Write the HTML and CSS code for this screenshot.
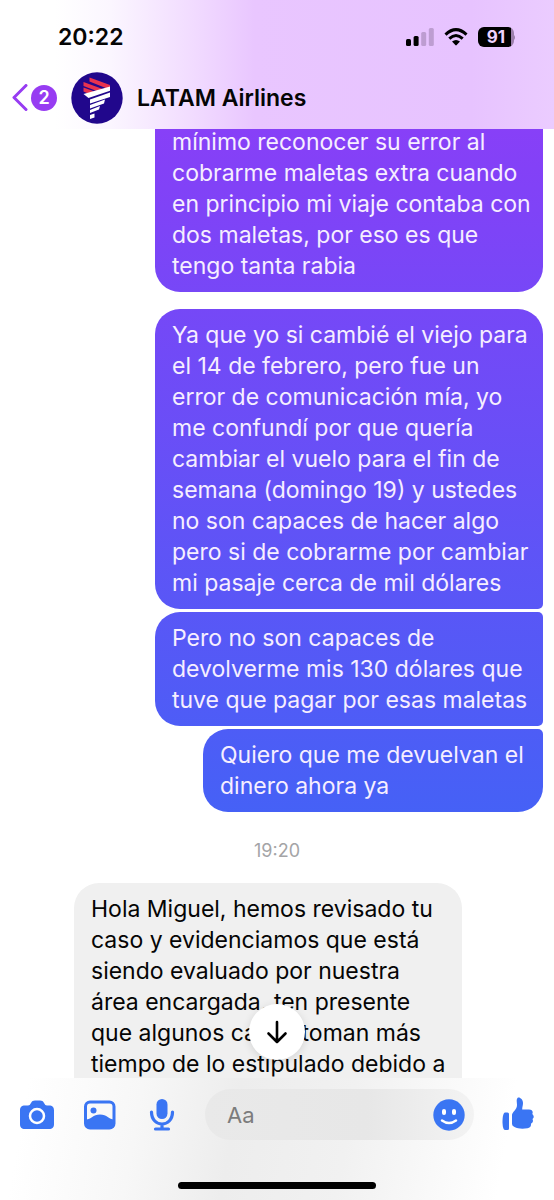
FILE: index.html
```html
<!DOCTYPE html>
<html lang="es">
<head>
<meta charset="utf-8">
<meta name="viewport" content="width=device-width, initial-scale=1">
<title>LATAM Airlines</title>
<link rel="stylesheet" href="styles.css">
</head>
<body>
<div class="app">
  <header class="top">
    <div class="status">
      <time class="clock">20:22</time>
      <div class="indicators">
        <svg width="28" height="18" viewBox="0 0 28 18" aria-hidden="true">
          <rect x="0" y="11" width="5" height="7" rx="1.5"/>
          <rect x="7.600" y="8" width="5" height="10" rx="1.500"/>
          <rect x="15.200" y="4" width="5" height="14" rx="1.500" fill="#bd9dd1"/>
          <rect x="22.800" y="0" width="5" height="18" rx="1.500" fill="#bd9dd1"/>
        </svg>
        <svg width="24" height="18" viewBox="0 0 24 18" aria-hidden="true">
          <g fill="none" stroke="#000" stroke-width="3">
            <path d="M1.500 6.600Q12-3.400 22.500 6.600"/>
            <path d="M5.300 10.600Q12 4.400 18.700 10.600"/>
          </g>
          <path d="M8 13.500q4-3.200 8 0l-3.300 3.600q-.7.600-1.400 0z"/>
        </svg>
        <div class="battery"><span>91</span></div>
      </div>
    </div>
    <div class="contact">
      <button class="back" type="button" aria-label="Volver, 2 sin leer">
        <svg width="16" height="28" viewBox="0 0 16 28" aria-hidden="true"><path d="M14 1.500 2 13.500l12 12" fill="none" stroke="#973cf2" stroke-width="3" stroke-linecap="round" stroke-linejoin="round"/></svg>
        <span class="unread">2</span>
      </button>
      <svg class="avatar" viewBox="0 0 52 52" aria-hidden="true">
        <circle cx="26" cy="26" r="25.700" fill="#21078c"/>
        <g fill="#e8334f">
          <path d="M18.500 5.500 39 13V15.500L36 16.500 18.500 9.500z"/>
          <path d="M12.500 10 33 17.500 27 19.500 12.500 14z"/>
          <path d="M12.500 15.500 23.500 19.500 17 21.500 12.500 19.500z"/>
        </g>
        <g fill="#fff">
          <path d="M39 14.500V18.800L17.500 26 12.500 22z"/>
          <path d="M39 20.500V25L19 31.500V27.500z"/>
          <path d="M34 27.500 33 31.500 19 36.500V33z"/>
          <path d="M29 34 28 37.500 19 41V38z"/>
          <path d="M23.500 41.500V45.500L19 47V43z"/>
        </g>
      </svg>
      <h1 class="name">LATAM Airlines</h1>
    </div>
  </header>

  <main class="thread">
    <p class="bubble sent cut">mínimo reconocer su error al<br>cobrarme maletas extra cuando<br>en principio mi viaje contaba con<br>dos maletas, por eso es que<br>tengo tanta rabia</p>
    <div class="group">
      <p class="bubble sent first">Ya que yo si cambié el viejo para<br>el 14 de febrero, pero fue un<br>error de comunicación mía, yo<br>me confundí por que quería<br>cambiar el vuelo para el fin de<br>semana (domingo 19) y ustedes<br>no son capaces de hacer algo<br>pero si de cobrarme por cambiar<br>mi pasaje cerca de mil dólares</p>
      <p class="bubble sent middle">Pero no son capaces de<br>devolverme mis 130 dólares que<br>tuve que pagar por esas maletas</p>
      <p class="bubble sent last">Quiero que me devuelvan el<br>dinero ahora ya</p>
    </div>
    <time class="stamp">19:20</time>
    <p class="bubble received">Hola Miguel, hemos revisado tu<br>caso y evidenciamos que está<br>siendo evaluado por nuestra<br>área encargada, ten presente<br>que algunos casos toman más<br>tiempo de lo estipulado debido a</p>
    <button class="jump" type="button" aria-label="Ir al final">
      <svg width="22" height="24" viewBox="0 0 22 24" aria-hidden="true"><path d="M11 2v20M2.500 13.500 11 22l8.500-8.500" fill="none" stroke="#000" stroke-width="2.600" stroke-linecap="round" stroke-linejoin="round"/></svg>
    </button>
  </main>

  <footer class="composer">
    <div class="bar">
      <div class="tools">
        <button type="button" aria-label="Cámara">
          <svg width="34" height="32" viewBox="0 0 34 32"><path fill="#3a75f3" d="M5 6.500h3c1.500 0 2-.8 3-2.500 1-1.800 2-2.500 4-2.500h5c2 0 3 .7 4 2.500 1 1.700 1.500 2.500 3 2.500h2c3.500 0 5 1.500 5 5V25c0 3.500-1.500 5-5 5H5c-3.500 0-5-1.500-5-5V11.500c0-3.500 1.500-5 5-5z"/><circle cx="17" cy="17" r="7" fill="#3a75f3" stroke="#fff" stroke-width="2.500"/></svg>
        </button>
        <button type="button" aria-label="Galería">
          <svg width="32" height="32" viewBox="0 0 32 32"><rect x="1.500" y="3" width="28.500" height="26" rx="4.500" fill="#f9f9f9" stroke="#3a75f3" stroke-width="3"/><circle cx="9.500" cy="11.500" r="3" fill="#3a75f3"/><path d="M2 20.500c5 0 7-5 14-5s9 5 14 5V26q0 3-3 3H5q-3 0-3-3z" fill="#3a75f3"/></svg>
        </button>
        <button type="button" aria-label="Micrófono">
          <svg width="32" height="34" viewBox="-3 0 32 34"><rect x="7.500" y="1" width="11" height="20" rx="5.500" fill="#3a75f3"/><path d="M2.500 14c0 16 21 16 21 0M13 26v5M6.500 31h13" fill="none" stroke="#3a75f3" stroke-width="3.200" stroke-linecap="round"/></svg>
        </button>
      </div>
      <div class="field">
        <input type="text" placeholder="Aa" aria-label="Mensaje">
        <button type="button" aria-label="Emojis">
          <svg width="32" height="32" viewBox="0 0 32 32"><circle cx="16" cy="16" r="15.700" fill="#3a75f3"/><g fill="#fff"><rect x="9" y="10" width="4" height="6" rx="2"/><rect x="19" y="10" width="4" height="6" rx="2"/></g><path d="M9 21.500q7 5 14 0" fill="none" stroke="#fff" stroke-width="2.500" stroke-linecap="round"/></svg>
        </button>
      </div>
      <button type="button" aria-label="Me gusta">
        <svg width="32" height="38" viewBox="0 0 32 38"><g fill="#3a75f3"><path d="M3 16.500h2.500Q7 16.500 7 18v14.500q0 1.500-1.500 1.500H3C1.500 34 .5 30.500.5 25.500s1-9 2.500-9z"/><path d="M10 19c0-3 5-5 5-10 0-2.500-1-5 .5-7C17 .5 21 3 21 7c0 2.500-.8 4-.8 6.500H27c3 0 4.500 2 3.300 4.500 2 1.800 1.700 4 .2 5 1 2 .3 3.800-1.500 4.700.3 2.800-1 4.100-3.500 4.600-5 .7-10 .5-13-1.300Q10 30 10 28z"/></g></svg>
      </button>
    </div>
    <div class="home"></div>
  </footer>
</div>
</body>
</html>
```
FILE: styles.css
```css
* {
  box-sizing: border-box;
}

body {
  margin: 0;
  background: #fff;
  color: #050505;
  font-family: Inter, "Liberation Sans", sans-serif;
}

button {
  display: flex;
  align-items: center;
  justify-content: center;
  padding: 0;
  border: 0;
  background: none;
  color: inherit;
  font: inherit;
}

.app {
  display: flex;
  flex-direction: column;
  height: 100vh;
}

.top {
  flex: none;
  padding: 22px 40px 5px 12px;
  background: linear-gradient(90deg, #fff 10%, #fbf6ff 20%, #f2ddff 34%, #e9c6ff 46%, #e7c3ff 85%, #ebccff 100%);
}

.status {
  display: flex;
  align-items: center;
  justify-content: space-between;
  height: 30px;
  padding-left: 46px;
}

.clock {
  font-size: 23px;
  font-weight: 600;
}

.indicators {
  display: flex;
  align-items: center;
  gap: 10px;
}

.battery {
  display: flex;
  align-items: center;
  justify-content: center;
  width: 36px;
  height: 20px;
  border-radius: 6px;
  background: linear-gradient(90deg, #000 91%, #9c7fac 91%);
  color: #eed4ff;
  font-size: 17px;
  font-weight: 700;
}

.battery::after {
  content: "";
  width: 2px;
  height: 5px;
  margin-right: -10px;
  margin-left: 8px;
  border-radius: 0 2px 2px 0;
  background: #9c7fac;
}

.contact {
  display: flex;
  align-items: center;
  margin-top: 20px;
}

.back {
  gap: 3px;
}

.unread {
  width: 26px;
  height: 26px;
  border-radius: 50%;
  background: #973cf2;
  color: #fff;
  font-size: 18px;
  font-weight: 600;
  line-height: 26px;
}

.avatar {
  width: 52px;
  height: 52px;
  margin: 0 14px;
}

.name {
  margin: 0;
  font-size: 23px;
  font-weight: 600;
}

.thread {
  position: relative;
  display: flex;
  flex: 1;
  flex-direction: column;
  min-height: 0;
  padding: 0 11px 0 74px;
  overflow: hidden;
}

.bubble {
  flex: none;
  margin: 0;
  padding: 11px 17px 10px;
  border-radius: 25px;
  font-size: 23px;
  line-height: 31px;
  white-space: nowrap;
}

.sent {
  align-self: flex-end;
  min-width: 340px;
  background: linear-gradient(#8b3ff8 8%, #8341f7 14%, #4561f6 68%) fixed;
  color: #f6eeff;
}

.cut,
.first,
.middle {
  width: 388px;
}

.cut {
  margin-top: -2px;
  padding-top: 0;
  border-radius: 0 0 25px 25px;
}

.group {
  display: flex;
  flex: none;
  flex-direction: column;
  gap: 3px;
  margin-top: 17px;
}

.first {
  border-bottom-right-radius: 5px;
}

.middle {
  border-top-right-radius: 5px;
  border-bottom-right-radius: 5px;
}

.last {
  border-top-right-radius: 5px;
}

.stamp {
  margin: 28px 0 21px -63px;
  color: #a4a4a6;
  font-size: 18px;
  line-height: 22px;
  text-align: center;
}

.received {
  align-self: flex-start;
  width: 388px;
  padding-bottom: 40px;
  background: #f0f0f0;
}

.jump {
  position: absolute;
  bottom: 18px;
  left: 50%;
  width: 56px;
  height: 56px;
  border-radius: 50%;
  background: #fff;
  box-shadow: 0 2px 8px rgba(0, 0, 0, 0.12);
  transform: translateX(-50%);
}

.composer {
  flex: none;
  padding: 11px 20px;
  background: linear-gradient(100deg, #fff 5%, #f7f7f7 25%, #ededed 42%, #f1f1f1 62%, #fff 90%);
}

.bar {
  display: flex;
  align-items: center;
}

.tools {
  display: flex;
  align-items: center;
  gap: 30px;
}

.field {
  display: flex;
  flex: 1;
  align-items: center;
  min-width: 0;
  height: 51px;
  margin: 0 28px 0 27px;
  padding: 0 9px 0 22px;
  border-radius: 26px;
  background: linear-gradient(90deg, #e9e9e9, #e7e7e7 60%, #f3f3f3);
}

.field input {
  flex: 1;
  min-width: 0;
  padding: 0;
  border: 0;
  outline: 0;
  background: none;
  font: inherit;
  font-size: 22px;
}

.field input::placeholder {
  color: #7c7c7c;
  opacity: 1;
}

.home {
  width: 198px;
  height: 7px;
  margin: 42px auto 0;
  border-radius: 4px;
  background: #000;
}
```
